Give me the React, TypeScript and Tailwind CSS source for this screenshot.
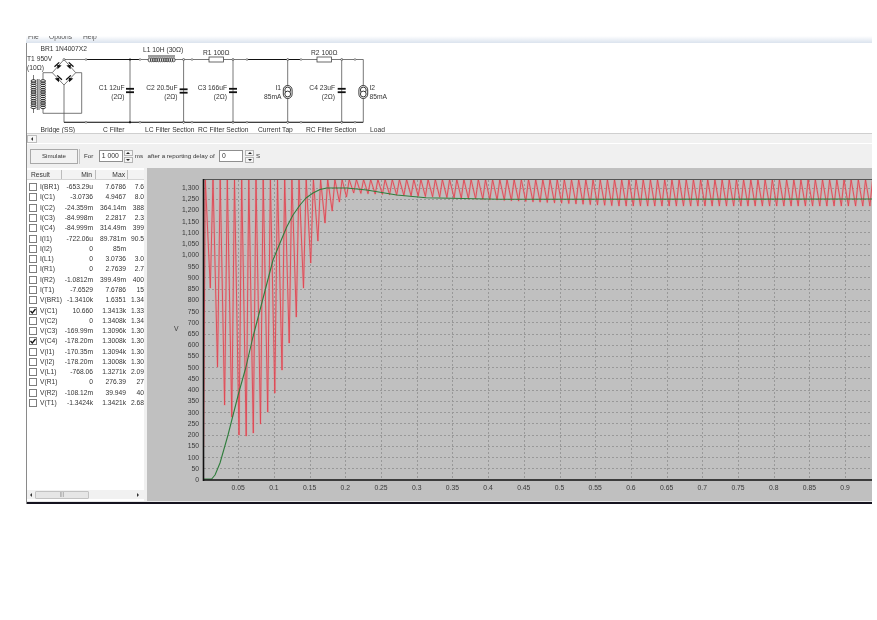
import React from "react";

const FONT = { fontFamily: '"Liberation Sans", Arial, sans-serif' };

type Row = { name: string; min: string; max: string; extra: string; checked?: boolean };

const rows: Row[] = [
  { name: "I(BR1)", min: "-653.29u", max: "7.6786", extra: "7.6" },
  { name: "I(C1)", min: "-3.0736", max: "4.9467", extra: "8.0" },
  { name: "I(C2)", min: "-24.359m", max: "364.14m", extra: "388" },
  { name: "I(C3)", min: "-84.998m", max: "2.2817", extra: "2.3" },
  { name: "I(C4)", min: "-84.999m", max: "314.49m", extra: "399" },
  { name: "I(I1)", min: "-722.06u", max: "89.781m", extra: "90.5" },
  { name: "I(I2)", min: "0", max: "85m", extra: "" },
  { name: "I(L1)", min: "0", max: "3.0736", extra: "3.0" },
  { name: "I(R1)", min: "0", max: "2.7639", extra: "2.7" },
  { name: "I(R2)", min: "-1.0812m", max: "399.49m", extra: "400" },
  { name: "I(T1)", min: "-7.6529", max: "7.6786", extra: "15" },
  { name: "V(BR1)", min: "-1.3410k", max: "1.6351", extra: "1.34" },
  { name: "V(C1)", min: "10.660", max: "1.3413k", extra: "1.33", checked: true },
  { name: "V(C2)", min: "0", max: "1.3408k", extra: "1.34" },
  { name: "V(C3)", min: "-169.99m", max: "1.3096k", extra: "1.30" },
  { name: "V(C4)", min: "-178.20m", max: "1.3008k", extra: "1.30", checked: true },
  { name: "V(I1)", min: "-170.35m", max: "1.3094k", extra: "1.30" },
  { name: "V(I2)", min: "-178.20m", max: "1.3008k", extra: "1.30" },
  { name: "V(L1)", min: "-768.06", max: "1.3271k", extra: "2.09" },
  { name: "V(R1)", min: "0", max: "276.39", extra: "27" },
  { name: "V(R2)", min: "-108.12m", max: "39.949", extra: "40" },
  { name: "V(T1)", min: "-1.3424k", max: "1.3421k", extra: "2.68" },
];

// Spinner next to the two number boxes
const Spinner = () => (
  <div className="flex h-[13px] w-[9px] flex-col gap-px">
    <div className="flex h-[6px] items-center justify-center border border-[#b5b5b5] bg-[#f4f4f4]">
      <div className="border-x-[2px] border-b-[2px] border-x-transparent border-b-[#222]" />
    </div>
    <div className="flex h-[6px] items-center justify-center border border-[#b5b5b5] bg-[#f4f4f4]">
      <div className="border-x-[2px] border-t-[2px] border-x-transparent border-t-[#222]" />
    </div>
  </div>
);

const Check = ({ checked }: { checked?: boolean }) => (
  <div className="flex size-[8px] shrink-0 items-center justify-center border border-[#7d7d7d] bg-white">
    {checked && (
      <svg width="6" height="6" viewBox="0 0 6 6">
        <polyline points="0.5,3 2.3,5 5.5,1" fill="none" stroke="#111" strokeWidth="1.3" />
      </svg>
    )}
  </div>
);

const Diode = ({ x, y, rot }: { x: number; y: number; rot: number }) => (
  <g transform={`translate(${x} ${y}) rotate(${rot})`}>
    <polygon points="-2.8,2 2.8,2 0,-1.6" fill="#111" />
    <line x1="-3.2" y1="-2" x2="3.2" y2="-2" stroke="#111" strokeWidth="1.3" />
  </g>
);

const Cap = ({ x, y, w = 8 }: { x: number; y: number; w?: number }) => (
  <g>
    <rect x={x - w / 2} y={y - 2.6} width={w} height={1.8} fill="#111" />
    <rect x={x - w / 2} y={y + 0.8} width={w} height={1.8} fill="#111" />
  </g>
);

const Source = ({ x }: { x: number }) => (
  <g fill="white" stroke="#222" strokeWidth="0.9">
    <rect x={x - 4.4} y={85.5} width={8.8} height={13} rx={4.4} />
    <circle cx={x} cy={90} r={2.9} />
    <circle cx={x} cy={94} r={2.9} />
  </g>
);

const Coil = ({ x, y, n, w }: { x: number; y: number; n: number; w: number }) => (
  <g fill="none" stroke="#222" strokeWidth="0.9">
    {Array.from({ length: n }).map((_, i) => (
      <ellipse key={i} cx={x + w / 2} cy={y + i * 2.2} rx={w / 2} ry={1.3} />
    ))}
  </g>
);

const Schematic = () => {
  const topDots = [86, 140, 183.6, 192, 233, 247, 287.7, 301, 341.7, 355];
  const junctions = [130, 183.6, 233, 287.7, 341.7];
  const t = { fontSize: 6.7, fill: "#333" };
  return (
    <svg width="360" height="90" viewBox="27 43 360 90" style={FONT}>
      <g stroke="#555" strokeWidth="0.8" fill="none">
        <polyline points="64,59.5 148,59.5" />
        <polyline points="175,59.5 209,59.5" />
        <polyline points="223.5,59.5 317,59.5" />
        <polyline points="332,59.5 363.3,59.5 363.3,122.3 64,122.3 64,85" />
        <polyline points="64,59.5 52.3,72.7 64,85 75.7,72.7 64,59.5" />
        <polyline points="52.3,72.7 43,72.7 43,80" />
        <polyline points="75.7,72.7 81.7,72.7 81.7,113.3 43,113.3 43,108" />
        <polyline points="33.5,75 33.5,80" />
        <polyline points="33.5,108 33.5,113" />
        <line x1="130" y1="59.5" x2="130" y2="122.3" />
        <line x1="183.6" y1="59.5" x2="183.6" y2="122.3" />
        <line x1="233" y1="59.5" x2="233" y2="122.3" />
        <line x1="287.7" y1="59.5" x2="287.7" y2="122.3" />
        <line x1="341.7" y1="59.5" x2="341.7" y2="122.3" />
      </g>
      <line x1="86" y1="59.5" x2="140" y2="59.5" stroke="#111" strokeWidth="1.1" />
      <line x1="247" y1="59.5" x2="301" y2="59.5" stroke="#111" strokeWidth="1.1" />
      <line x1="64" y1="122.3" x2="363" y2="122.3" stroke="#222" strokeWidth="0.9" />

      {junctions.map((x) => (
        <g key={x}>
          <circle cx={x} cy={59.5} r={1.1} fill="#111" />
          <circle cx={x} cy={122.3} r={1.1} fill="#111" />
        </g>
      ))}
      {topDots.map((x) => (
        <g key={x} fill="white" stroke="#555" strokeWidth="0.6">
          <circle cx={x} cy={59.5} r={0.9} />
          <circle cx={x} cy={122.3} r={0.9} />
        </g>
      ))}

      {/* bridge */}
      <Diode x={58.2} y={66} rot={-42} />
      <Diode x={69.8} y={66} rot={42} />
      <Diode x={58.2} y={79} rot={42} />
      <Diode x={69.8} y={79} rot={-42} />
      <circle cx={64} cy={59.5} r={1} fill="white" stroke="#333" strokeWidth="0.6" />

      {/* transformer */}
      <Coil x={31} y={81} n={13} w={5} />
      <Coil x={40.5} y={81} n={13} w={5} />
      <line x1="37.3" y1="79" x2="37.3" y2="110" stroke="#333" strokeWidth="0.8" />
      <line x1="39" y1="79" x2="39" y2="110" stroke="#333" strokeWidth="0.8" />

      {/* inductor */}
      <g fill="none" stroke="#333" strokeWidth="0.8">
        {Array.from({ length: 12 }).map((_, i) => (
          <ellipse key={i} cx={149.5 + i * 2.2} cy={60} rx={1.4} ry={1.8} />
        ))}
      </g>
      <line x1="148" y1="57" x2="175" y2="57" stroke="#333" strokeWidth="0.7" />
      <line x1="148" y1="55.8" x2="175" y2="55.8" stroke="#333" strokeWidth="0.7" />

      {/* resistors */}
      <rect x="209" y="57" width="14.5" height="5" fill="white" stroke="#444" strokeWidth="0.8" />
      <rect x="317" y="57" width="14.5" height="5" fill="white" stroke="#444" strokeWidth="0.8" />

      <Cap x={130} y={90.5} />
      <Cap x={183.6} y={91} />
      <Cap x={233} y={90.5} />
      <Cap x={341.7} y={90.5} />
      <Source x={287.7} />
      <Source x={363.3} />

      <g {...t}>
        <text x="40.5" y="51">BR1 1N4007X2</text>
        <text x="27" y="61">T1 950V</text>
        <text x="27" y="70">(10Ω)</text>
        <text x="143" y="51.5">L1 10H (30Ω)</text>
        <text x="203" y="54.5">R1 100Ω</text>
        <text x="311" y="54.5">R2 100Ω</text>
        <g textAnchor="end">
          <text x="124.5" y="89.5">C1 12uF</text>
          <text x="124.5" y="98.5">(2Ω)</text>
          <text x="177.5" y="89.5">C2 20.5uF</text>
          <text x="177.5" y="98.5">(2Ω)</text>
          <text x="227" y="89.5">C3 166uF</text>
          <text x="227" y="98.5">(2Ω)</text>
          <text x="281" y="89.5">I1</text>
          <text x="281.5" y="98.5">85mA</text>
          <text x="335" y="89.5">C4 23uF</text>
          <text x="335" y="98.5">(2Ω)</text>
        </g>
        <text x="369.5" y="89.5">I2</text>
        <text x="369.5" y="98.5">85mA</text>
        <text x="40.5" y="132">Bridge (SS)</text>
        <text x="103" y="132">C Filter</text>
        <text x="145" y="132">LC Filter Section</text>
        <text x="198" y="132">RC Filter Section</text>
        <text x="258" y="132">Current Tap</text>
        <text x="306" y="132">RC Filter Section</text>
        <text x="370" y="132">Load</text>
      </g>
    </svg>
  );
};

// measured troughs of the red trace, one for every half cycle
const troughs = [288, 367, 405, 417, 435, 436, 433, 424, 412, 393, 370, 343, 317, 288, 263, 241, 223, 211, 202, 197, 193];

const trough = (n: number) => {
  if (n < troughs.length) return troughs[n];
  return Math.min(206, 193 + (n - 20) * 0.35);
};

const redPoints = () => {
  const pts: string[] = ["203.5,447", "205.3,179.5"];
  for (let n = 0; n < 94; n++) {
    const x = 210.3 + n * 7.17;
    pts.push(`${x.toFixed(1)},${trough(n)}`);
    pts.push(`${(x + 2.7).toFixed(1)},179.5`);
  }
  return pts.join(" ");
};

const greenPoints =
  "203,479 211.7,479 215,475 220,463 228,435 238.7,393 245.7,368 252.7,338 260,310 267,283 273,260 280,243 286.7,227 293,215 300,205 306,198 313,193 320,189.5 326.7,188 346.7,188 366.7,190 396.7,195 426,197.7 500,199.3 872,199";

const Chart = () => {
  const py = (v: number) => 479.5 - v * 0.2246;
  const levels = Array.from({ length: 26 }).map((_, i) => (i + 1) * 50);
  const ticks = Array.from({ length: 18 }).map((_, i) => (i + 1) * 0.05);
  const fmt = (v: number) => (v >= 1000 ? `1,${String(v - 1000).padStart(3, "0")}` : String(v));
  return (
    <svg width="725" height="333" viewBox="147 168 725 333" style={FONT}>
      <defs>
        <clipPath id="plot">
          <rect x="203" y="179" width="669" height="301" />
        </clipPath>
      </defs>
      <g stroke="#989898" strokeWidth="1" strokeDasharray="2 2">
        {levels.map((v) => (
          <line key={v} x1="204" x2="872" y1={Math.round(py(v)) + 0.5} y2={Math.round(py(v)) + 0.5} />
        ))}
        {ticks.map((v) => (
          <line key={v} y1="180" y2="479" x1={Math.round(202.5 + v * 714) + 0.5} x2={Math.round(202.5 + v * 714) + 0.5} />
        ))}
      </g>
      <g clipPath="url(#plot)" fill="none" strokeLinejoin="round">
        <polyline points={redPoints()} stroke="#e88" strokeOpacity="0.35" strokeWidth="2.2" />
        <polyline points={redPoints()} stroke="#e04552" strokeWidth="0.9" />
        <polyline points={greenPoints} stroke="#2f7d3c" strokeWidth="1.1" />
      </g>
      <line x1="203" x2="872" y1="179.5" y2="179.5" stroke="#555" strokeWidth="1" />
      <line x1="203.5" x2="203.5" y1="179" y2="481" stroke="#111" strokeWidth="1.6" />
      <line x1="203" x2="872" y1="480" y2="480" stroke="#111" strokeWidth="1.4" />
      <g fontSize="6.8" fill="#3a3a3a">
        <text x="174" y="331">V</text>
        <g textAnchor="end">
          <text x="199" y={py(0) + 2}>0</text>
          {levels.map((v) => (
            <text key={v} x="199" y={py(v) + 2.5}>{fmt(v)}</text>
          ))}
        </g>
        <g textAnchor="middle">
          {ticks.map((v) => (
            <text key={v} x={202.5 + v * 714} y="490">{String(Number(v.toFixed(2)))}</text>
          ))}
        </g>
      </g>
    </svg>
  );
};

const App = () => {
  return (
    <div className="h-[620px] w-[877px] overflow-hidden bg-white pt-[36px] pl-[26px] text-[6.7px] text-[#333] blur-[0.35px]" style={FONT}>
      <div className="flex w-[846px] flex-col">
        {/* menu strip, cut off by the top of the capture */}
        <div className="h-[7px] overflow-hidden bg-gradient-to-b from-white to-[#dbe3ee] pl-[2px]">
          <div className="-mt-[4px] flex leading-[9px] text-[#555]">
            <span className="w-[21px]">File</span>
            <span className="w-[34px]">Options</span>
            <span>Help</span>
          </div>
        </div>

        <div className="flex flex-col border-l border-[#8a8a8a]">
          <div className="h-[90px] bg-white">
            <Schematic />
          </div>

          {/* schematic scrollbar */}
          <div className="flex h-[10px] items-center border-t border-[#cfcfcf] bg-[#f1f1f1]">
            <div className="flex h-[8px] w-[10px] items-center justify-center border border-[#bdbdbd] bg-[#f7f7f7]">
              <div className="border-y-[2px] border-r-[2px] border-y-transparent border-r-[#333]" />
            </div>
          </div>

          {/* simulate toolbar */}
          <div className="flex h-[25px] items-center border-t border-white bg-[#f0f0f0] pl-[3px] text-[6.2px]">
            <div className="flex h-[15px] w-[48px] items-center justify-center border border-[#a9a9a9] bg-[#f2f2f2]">Simulate</div>
            <div className="ml-px h-[15px] w-px bg-[#c4c4c4]" />
            <span className="ml-[4px]">For</span>
            <div className="ml-[5.5px] flex h-[12px] w-[24px] items-center border border-[#8f8f8f] bg-white pl-[2px] text-[6.8px]">1 000</div>
            <div className="ml-[1px]"><Spinner /></div>
            <span className="ml-[2px]">ms</span>
            <span className="ml-[4.5px]">after a reporting delay of</span>
            <div className="ml-[4.5px] flex h-[12px] w-[24px] items-center border border-[#8f8f8f] bg-white pl-[2px] text-[6.8px]">0</div>
            <div className="ml-[2px]"><Spinner /></div>
            <span className="ml-[2px]">S</span>
          </div>

          <div className="flex h-[333px]">
            {/* results table */}
            <div className="flex w-[117px] flex-col overflow-hidden bg-white pt-[2px]">
              <div className="flex h-[10px] border-b border-[#d5d5d5] bg-[#f3f3f3]">
                <div className="w-[35px] border-r border-[#bcbcbc] pl-[4px] leading-[10px]">Result</div>
                <div className="w-[34px] border-r border-[#bcbcbc] pr-[3px] text-right leading-[10px]">Min</div>
                <div className="w-[32px] border-r border-[#bcbcbc] pr-[2px] text-right leading-[10px]">Max</div>
              </div>
              <div className="flex-1 pt-[2px]">
                {rows.map((r) => (
                  <div key={r.name} className="flex h-[10.29px] items-center pl-[2px] leading-[10px]">
                    <Check checked={r.checked} />
                    <span className="ml-[3px] w-[22px]">{r.name}</span>
                    <span className="w-[31px] text-right whitespace-nowrap">{r.min}</span>
                    <span className="w-[33px] text-right whitespace-nowrap">{r.max}</span>
                    <span className="w-[18px] shrink-0 text-right">{r.extra}</span>
                  </div>
                ))}
              </div>
              {/* table scrollbar */}
              <div className="mb-[2px] flex h-[9px] items-center justify-between bg-[#f1f1f1]">
                <div className="ml-[3px] border-y-[2px] border-r-[2px] border-y-transparent border-r-[#333]" />
                <div className="ml-[3px] flex h-[8px] w-[54px] items-center justify-center rounded-[1px] border border-[#c2c2c2] bg-[#e6e6e6] text-[5px] leading-none text-[#777]">|||</div>
                <div className="ml-auto mr-[5px] border-y-[2px] border-l-[2px] border-y-transparent border-l-[#333]" />
              </div>
            </div>
            <div className="w-[3px] bg-[#f0f0f0]" />
            <div className="flex-1 bg-[#c0c0c0]">
              <Chart />
            </div>
          </div>

          <div className="h-px bg-[#e8e8e8]" />
          <div className="h-[2px] bg-[#15131f]" />
        </div>
      </div>
    </div>
  );
};

export default App;
